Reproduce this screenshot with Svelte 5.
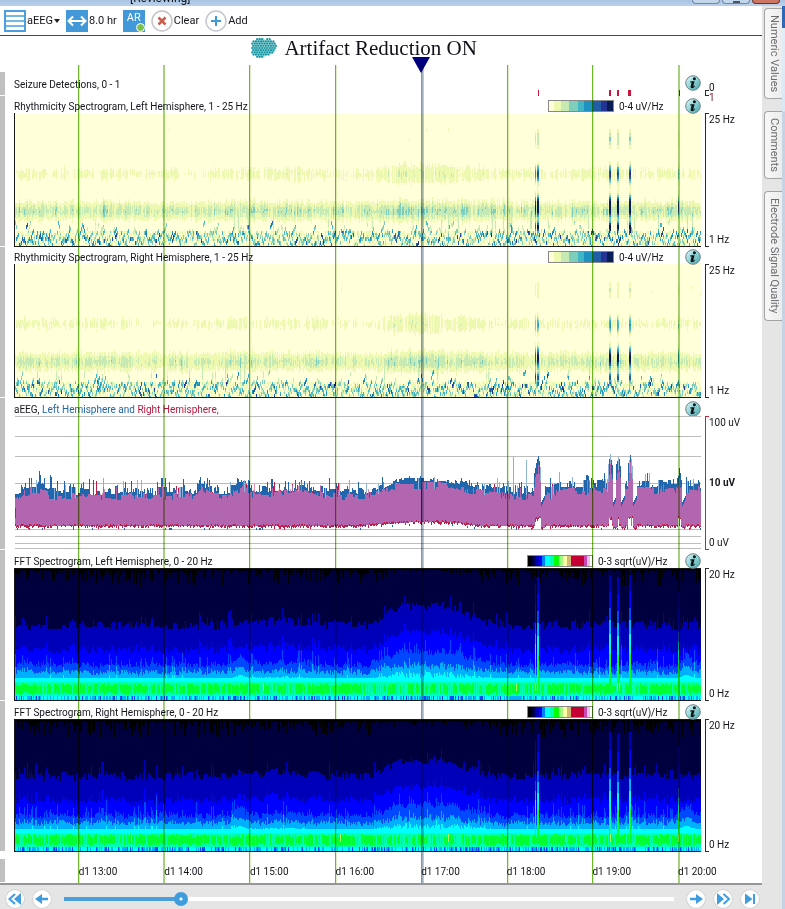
<script lang="ts">
	type Layer = { color: string; d: string };

	const W = 687;
	const H = 133;
	const HOUR = 85.8;
	const FIRST_HOUR = 63.5;

	const hours = [13, 14, 15, 16, 17, 18, 19, 20];
	const seizures = [
		{ x: 521, w: 1, power: 0.75 },
		{ x: 523, w: 2, power: 0.95 },
		{ x: 595, w: 2, power: 1 },
		{ x: 603, w: 2, power: 0.95 },
		{ x: 615, w: 2, power: 1 },
		{ x: 664, w: 1, power: 0.6 },
	];
	const detections = [
		{ x: 524, w: 1 },
		{ x: 595, w: 2 },
		{ x: 603, w: 2 },
		{ x: 614, w: 3 },
		{ x: 665, w: 1 },
	];

	const rhythmColors = ['#ffffd9', '#edf8b1', '#c7e9b4', '#7fcdbb', '#41b6c4', '#1d91c0', '#225ea8', '#253494', '#081d58'];
	const fftColors = ['#000000', '#00003e', '#0000b8', '#0000ff', '#0048ff', '#00b0ff', '#00ffff', '#00ffb0', '#00ff30', '#b0ff60'];

	let position = $state(185);
	let montage = $state('aEEG');
	let reduction = $state(true);

	function random(seed: number) {
		let s = seed;
		return () => {
			s = (s + 0x6d2b79f5) | 0;
			let t = Math.imul(s ^ (s >>> 15), 1 | s);
			t = (t + Math.imul(t ^ (t >>> 7), 61 | t)) ^ t;
			return ((t ^ (t >>> 14)) >>> 0) / 4294967296;
		};
	}

	function smooth(a: number, b: number, x: number) {
		const t = Math.min(1, Math.max(0, (x - a) / (b - a)));
		return t * t * (3 - 2 * t);
	}

	function gauss(x: number, mid: number, width: number) {
		return Math.exp(-(((x - mid) / width) ** 2));
	}

	// activity rises around 17:00
	function activity(x: number) {
		return smooth(350, 390, x) * (1 - smooth(425, 490, x)) + 0.25 * gauss(x, 268, 30) + 0.2 * gauss(x, 225, 10);
	}

	function seizureAt(x: number) {
		return seizures.find((s) => x >= s.x && x < s.x + s.w);
	}

	function layers(colors: string[], cells: string[][]): Layer[] {
		return colors.map((color, i) => ({ color, d: cells[i].join('') })).filter((l) => l.d);
	}

	// short slanted strokes along the bottom of the rhythmicity plots
	function strokes(rnd: () => number) {
		const deep: number[][] = Array.from({ length: W + 8 }, () => new Array(H).fill(0));
		for (let x = 0; x < W; x++) {
			const tall = rnd() < 0.05;
			let y = tall ? 108 + rnd() * 8 : 116 + rnd() * 14;
			const slope = (rnd() < 0.5 ? -1 : 1) * (1 + rnd() * 3);
			const length = 1 + Math.floor(rnd() * 2.5);
			const level = 2 + rnd() * rnd() * 5;
			for (let i = 0; i < length; i++) {
				const from = Math.round(y);
				for (let k = from; k < from + 4; k++) {
					if (k > 104 && k < H) deep[x + i][k] = Math.max(deep[x + i][k], level);
				}
				y += slope;
			}
		}
		return deep;
	}

	function rhythmicity(seed: number, gain: number, midA: number): Layer[] {
		const rnd = random(seed);
		const cells: string[][] = rhythmColors.map(() => []);
		const deep = strokes(rnd);
		let drift = 0;
		for (let x = 0; x < W; x++) {
			const act = activity(x);
			const s = seizureAt(x);
			if (rnd() < 0.35) drift = rnd() * 0.7 - 0.35;
			const a = (0.8 + drift + rnd() * 0.7 + act * 0.6) * (rnd() < 0.15 ? 0.5 : 1);
			const b = 1.7 + drift * 1.3 + rnd() * 1.1 + act * 0.4 + (rnd() < 0.08 ? 0.8 : 0);
			const wA = 5 + rnd() * 4 + act * 4;
			const wB = 7 + rnd() * 4 + act;
			const jitter = rnd() * 3 - 1.5;
			const tail = rnd() < 0.03;
			for (let y = 0; y < H; y += 2) {
				let v = a * gauss(y, midA + jitter, wA) * gain + b * gauss(y, 97 + jitter, wB) * gain;
				v += (rnd() - 0.5) * 0.35 * (y > 45 && y < 115 ? 1 : 0);
				v += deep[x][y] + (y > 116 ? rnd() * 1.6 : 0);
				if (tail) v += 2 * gauss(y, 112, 8);
				if (s) {
					const p = s.power * (gain < 0.95 ? 0.75 : 1);
					v += p * 3 * gauss(y, 25, 9) * gain + p * 6 * gauss(y, 60, 9) * gain;
					v += p * 10 * gauss(y, 92, 10) + (s.power > 0.7 ? 9 * p * gauss(y, 113, 5) : 0);
				}
				const level = Math.min(8, Math.floor(v + 0.1));
				if (level > 0) cells[level].push(`M${x} ${y}h1v2h-1z`);
			}
			if (rnd() < 0.006) cells[1].push(`M${x} ${14 + Math.round(rnd() * 16)}h1v3h-1z`);
		}
		return layers(rhythmColors, cells);
	}

	function fft(seed: number, lift: number): Layer[] {
		const rnd = random(seed);
		const cells: string[][] = fftColors.map(() => []);
		let drift = 0;
		let low = 0;
		for (let x = 0; x < W; x++) {
			if (rnd() < 0.5) drift = rnd() * 9 - 4;
			if (rnd() < 0.4) low = rnd() * 5 - 2;
			const act = activity(x) * lift;
			const s = seizureAt(x);
			const peak = rnd() < 0.12 ? rnd() * 12 : 0;
			const burst = 3 * gauss(x, 672, 6) + 2 * gauss(x, 225, 5) + (rnd() < 0.04 ? 3 : 0);
			let edges = [
				Math.max(1, (rnd() ** 2) * 18 * (1 - act * 0.8)),
				57 - act * 19 + drift - peak,
				79 - act * 17 + drift * 0.7 + rnd() * 5 - peak * 0.7,
				96 - act * 14 + low + rnd() * 5 - 2 - peak - burst * 3,
				107 - act * 5 + low * 0.6 - rnd() * 4 * (1 + act) - peak * 0.5 - burst * 2,
				111 - rnd() * 7 * act - burst,
				115,
				116 + rnd() * 3,
			];
			if (s) {
				const p = s.power * lift;
				edges = [0, 6 + (1 - p) * 40, 22 + (1 - p) * 50, 40 + (1 - p) * 60, 52 + (1 - p) * 55, 66 + (1 - p) * 40, 78 + (1 - p) * 30, 86 + (1 - p) * 25];
			}
			let top = 0;
			edges.forEach((edge, i) => {
				const end = Math.max(top, Math.round(edge));
				if (end > top) cells[i].push(`M${x} ${top}h1V${end}h-1z`);
				top = end;
			});
			const quiet = rnd() < 0.18 + act * 0.4;
			const green = 125 + Math.round(rnd() * 3);
			cells[quiet ? 7 : 8].push(`M${x} ${top}h1V${green}h-1z`);
			cells[7].push(`M${x} ${green}h1V129h-1z`);
			const speck = rnd();
			cells[speck < 0.16 ? 4 : speck < 0.5 ? 5 : 6].push(`M${x} 129h1V133h-1z`);
			if (rnd() < 0.005 || (s && rnd() < 0.5)) cells[9].push(`M${x} 116h1v8h-1z`);
		}
		return layers(fftColors, cells);
	}

	function amplitude(): Layer[] {
		const rnd = random(41);
		const colors = ['#b366b0', '#2166ac', '#c01c46', '#8db4dc', '#dc8fae'];
		const cells: string[][] = colors.map(() => []);
		let wander = 0;
		let sway = 0;
		for (let x = 0; x < W; x++) {
			const act = activity(x);
			if (rnd() < 0.4) wander = rnd() * 9 * (1 - act * 0.5);
			if (rnd() < 0.4) sway = rnd() * 8 - 1;
			const rise = act * 13 + 6 * gauss(x, 18, 12) + 8 * gauss(x, 187, 5) + 6 * smooth(535, 550, x) + 5 * gauss(x, 225, 8);
			let left = 79 - rise - wander - (rnd() < 0.18 ? (3 + rnd() * 9) * (1 - act * 0.8) : 0);
			let right = 83 - rise * 0.85 - sway - (rnd() < 0.12 ? (4 + rnd() * 11) * (1 - act) : 0);
			let bottom = 110 - smooth(330, 410, x) * (1 - smooth(430, 470, x)) * 4;
			let spike = false;
			for (const s of seizures) {
				const near = Math.abs(x - s.x - 1);
				if (near < 3) {
					left = Math.min(left, 74 - s.power * 38 + near * 5 + rnd() * 4);
					right = Math.min(right, 78 - s.power * 32 + near * 7 + rnd() * 6);
					spike = true;
				} else if (x > s.x && near < 7) {
					left = Math.max(left, 92 - near * 2);
					right = Math.max(right, 96 - near * 2);
					bottom = 112;
				}
			}
			if (x === 499) right = 41;
			if (x === 512) left = 44;
			if (spike && rnd() < 0.45) bottom = 102;
			left = Math.round(Math.max(36, left));
			right = Math.round(Math.max(38, right));
			const shared = Math.max(left, right);
			const faded = rnd() < 0.25;
			if (left < right) cells[faded && right - left > 9 ? 3 : 1].push(`M${x} ${left}h1V${right}h-1z`);
			if (right < left) cells[faded ? 4 : 2].push(`M${x} ${right}h1V${left}h-1z`);
			cells[0].push(`M${x} ${shared}h1V${Math.round(bottom)}h-1z`);
			if (rnd() < 0.8) cells[2].push(`M${x} ${Math.round(bottom - rnd() * 2)}h1v${1 + Math.round(rnd() * 2)}h-1z`);
			if (rnd() < 0.04) cells[1].push(`M${x} ${Math.round(bottom) + 2}h1v2h-1z`);
		}
		cells[2].push('M407 71h1V109h-1z', 'M0 92h1v10h-1z');
		return layers(colors, cells);
	}

	function brainDots() {
		const dots: { x: number; y: number }[] = [];
		for (let row = 0; row < 9; row++) {
			for (let col = 0; col < 11; col++) {
				const x = 1.2 + col * 2.5 + (row % 2) * 1.25;
				const y = 1.2 + row * 2.2;
				const front = ((x - 9) / 9) ** 2 + ((y - 10) / 10) ** 2 < 1;
				const back = ((x - 17) / 8.5) ** 2 + ((y - 9) / 8) ** 2 < 1;
				if (front || back) dots.push({ x, y });
			}
		}
		return dots;
	}

	const channels = [
		{ kind: 'rhythm', title: 'Rhythmicity Spectrogram, Left Hemisphere, 1 - 25 Hz', scale: '0-4 uV/Hz', axis: ['25 Hz', '1 Hz'], layers: rhythmicity(7, 1, 60) },
		{ kind: 'rhythm', title: 'Rhythmicity Spectrogram, Right Hemisphere, 1 - 25 Hz', scale: '0-4 uV/Hz', axis: ['25 Hz', '1 Hz'], layers: rhythmicity(19, 0.88, 59) },
		{ kind: 'aeeg', title: 'aEEG,', scale: '', axis: ['100 uV', '10 uV', '0 uV'], layers: amplitude() },
		{ kind: 'fft', title: 'FFT Spectrogram, Left Hemisphere, 0 - 20 Hz', scale: '0-3 sqrt(uV)/Hz', axis: ['20 Hz', '0 Hz'], layers: fft(3, 1) },
		{ kind: 'fft', title: 'FFT Spectrogram, Right Hemisphere, 0 - 20 Hz', scale: '0-3 sqrt(uV)/Hz', axis: ['20 Hz', '0 Hz'], layers: fft(23, 0.85) },
	];
	const brain = brainDots();
	const tabs = ['Numeric Values', 'Comments', 'Electrode Signal Quality'];
</script>

{#snippet info(label: string)}
	<button class="info" aria-label="About {label}">
		<svg viewBox="0 0 16 16" width="16" height="16">
			<defs>
				<linearGradient id="glass" x1="0" y1="0" x2="1" y2="1">
					<stop offset="0" stop-color="#e4f8f8" />
					<stop offset="0.5" stop-color="#8fd3d5" />
					<stop offset="1" stop-color="#3fa2a8" />
				</linearGradient>
			</defs>
			<circle cx="8" cy="8" r="7.3" fill="url(#glass)" stroke="#6f8488" />
			<circle cx="9.4" cy="3.8" r="1.5" fill="#0b1416" />
			<path d="M5.4 6.3h4.2L8.2 11.5q.7 0 1.4-.9l.5.4Q8.900 13.300 6.900 13.300 5.200 13.300 5.700 11.300L6.600 7.500H5.200z" fill="#0b1416" />
		</svg>
	</button>
{/snippet}

<div class="window">
	<div class="titlebar">
		<span class="caption">[Reviewing]</span>
		<div class="controls">
			<button aria-label="Minimize"></button>
			<button aria-label="Maximize"><i></i></button>
			<button class="close" aria-label="Close"></button>
		</div>
	</div>

	<div class="body">
		<main>
			<div class="toolbar">
				<label class="tool">
					<svg viewBox="0 0 22 22" width="22" height="22">
						<rect x="1" y="1" width="20" height="20" fill="#fff" stroke="#4a9fdc" stroke-width="2" />
						<path d="M1 6h20M1 11h20M1 16h20" stroke="#4a9fdc" stroke-width="1.5" />
					</svg>
					<select bind:value={montage} aria-label="Montage">
						<option>aEEG</option>
						<option>FFT</option>
					</select>
					<svg viewBox="0 0 6 4" width="6" height="4"><path d="M0 0h6L3 4z" fill="#222" /></svg>
				</label>
				<button class="tool">
					<svg viewBox="0 0 22 22" width="22" height="22">
						<rect width="22" height="22" fill="#4298d8" />
						<path d="M3 11h16M7 6.500L2.500 11 7 15.500M15 6.500L19.500 11 15 15.500" fill="none" stroke="#fff" stroke-width="2" />
					</svg>
					8.0 hr
				</button>
				<button class="ar" aria-pressed={reduction} onclick={() => (reduction = !reduction)}>
					AR<i class:on={reduction}></i>
				</button>
				<button class="tool">
					<svg viewBox="0 0 22 22" width="22" height="22">
						<circle cx="11" cy="11" r="10" fill="#fff" stroke="#c9c2c4" stroke-width="1.5" />
						<path d="M7.500 7.500l7 7M14.500 7.500l-7 7" stroke="#c8604f" stroke-width="2.6" />
					</svg>
					Clear
				</button>
				<button class="tool">
					<svg viewBox="0 0 22 22" width="22" height="22">
						<circle cx="11" cy="11" r="10" fill="#fff" stroke="#c3c7cf" stroke-width="1.5" />
						<path d="M11 6v10M6 11h10" stroke="#3c9add" stroke-width="2" />
					</svg>
					Add
				</button>
			</div>

			<header>
				<svg viewBox="0 0 26 20" width="26" height="20">
					<ellipse cx="9.5" cy="10" rx="9" ry="10" fill="#a8dcdd" />
					<ellipse cx="17" cy="9.5" rx="8.5" ry="7.5" fill="#a8dcdd" />
					{#each brain as dot}
						<circle cx={dot.x} cy={dot.y} r="1.1" fill="#1795a2" />
					{/each}
				</svg>
				<h1>Artifact Reduction {reduction ? 'ON' : 'OFF'}</h1>
			</header>

			<div class="chart">
				<section class="row detections">
					<div class="handle"></div>
					<div class="track">
						<div class="head">
							<span class="title">Seizure Detections, 0 - 1</span>
							{@render info('Seizure Detections')}
						</div>
						<svg class="ticks" viewBox="0 0 {W} 6" preserveAspectRatio="none">
							{#each detections as mark}
								<rect x={mark.x} y="0" width={mark.w} height="6" fill="#c8173f" />
							{/each}
						</svg>
					</div>
					<div class="axis tiny">
						<div class="bracket"></div>
						<div class="values"><span>0</span><span>1</span></div>
					</div>
				</section>

				{#each channels as channel}
					<section class="row {channel.kind}">
						<div class="handle"></div>
						<div class="track">
							<div class="head">
								<span class="title">
									{channel.title}
									{#if channel.kind === 'aeeg'}
										<span class="left">Left Hemisphere and</span>
										<span class="right">Right Hemisphere,</span>
									{/if}
								</span>
								{#if channel.scale}
									<span class="legend"></span>
									<span class="scale">{channel.scale}</span>
								{/if}
								{@render info(channel.title)}
							</div>
							<svg class="plot" viewBox="0 0 {W} {H}" preserveAspectRatio="none">
								{#if channel.kind === 'aeeg'}
									{#each [0, 20, 40, 67, 113, 120, 127, 132] as y}
										<rect x="0" {y} width={W} height="1" fill="#bdbdbd" />
									{/each}
								{/if}
								{#each channel.layers as layer}
									<path d={layer.d} fill={layer.color} />
								{/each}
							</svg>
						</div>
						<div class="axis">
							<div class="bracket"></div>
							<div class="values">
								{#each channel.axis as value}
									<span>{value}</span>
								{/each}
							</div>
						</div>
					</section>
				{/each}

				<section class="row times">
					<div class="handle"></div>
					<div class="track">
						{#each hours as hour}
							<span>d1 {hour}:00</span>
						{/each}
					</div>
				</section>

				<div class="grid">
					{#each hours as hour, i}
						<div class="line" class:wide={hour === 14 || hour === 20} style="left: {((FIRST_HOUR + i * HOUR) / W) * 100}%"></div>
					{/each}
				</div>
				<div class="cursor">
					<svg viewBox="0 0 18 16" width="18" height="16"><path d="M0 0h18L9 16z" fill="#00007c" /></svg>
				</div>
			</div>

			<footer>
				<button class="nav" aria-label="First page">
					<svg viewBox="0 0 20 20" width="20" height="20"><path d="M10 5L4.500 10 10 15" fill="none" stroke="#3f9ddd" stroke-width="2" /><path d="M16 4v12l-7-6z" fill="#3f9ddd" /></svg>
				</button>
				<button class="nav" aria-label="Back">
					<svg viewBox="0 0 20 20" width="20" height="20"><path d="M3 10l7-5v3.700h6v2.600h-6V15z" fill="#3f9ddd" /></svg>
				</button>
				<input type="range" min="0" max="1000" bind:value={position} aria-label="Position" style="--at: {position / 10}%" />
				<button class="nav" aria-label="Forward">
					<svg viewBox="0 0 20 20" width="20" height="20"><path d="M17 10l-7-5v3.700H4v2.600h6V15z" fill="#3f9ddd" /></svg>
				</button>
				<button class="nav" aria-label="Fast forward">
					<svg viewBox="0 0 20 20" width="20" height="20"><path d="M4 4v12l7-6z" fill="#3f9ddd" /><path d="M10.500 5L16 10l-5.500 5" fill="none" stroke="#3f9ddd" stroke-width="2" /></svg>
				</button>
				<button class="nav" aria-label="Last page">
					<svg viewBox="0 0 20 20" width="20" height="20"><path d="M5 4.500v11l7.500-5.500zM13 5h2v10h-2z" fill="#3f9ddd" /></svg>
				</button>
			</footer>
		</main>

		<aside>
			{#each tabs as tab}
				<button class="tab">{tab}</button>
			{/each}
		</aside>
		<div class="edge"></div>
	</div>
</div>

<style>
	:global(body) {
		background: #e5e5e5;
	}

	.window {
		font-family: Roboto, 'Liberation Sans', sans-serif;
		font-size: 10px;
		line-height: 14px;
		color: #14141c;
	}

	button,
	select {
		font: inherit;
		color: inherit;
		background: none;
		border: 0;
		padding: 0;
		cursor: pointer;
	}

	svg {
		display: block;
		flex: none;
	}

	.titlebar {
		height: 6px;
		display: flex;
		align-items: flex-end;
		justify-content: space-between;
		background: linear-gradient(#a9c5e3, #b9d0ea);
		overflow: hidden;
	}

	.caption {
		font-size: 12px;
		line-height: 14px;
		padding: 0 0 1px 130px;
	}

	.controls {
		display: flex;
		align-self: flex-start;
		gap: 2px;
		padding-right: 5px;
	}

	.controls button {
		box-sizing: border-box;
		width: 28px;
		height: 4px;
		border: 1px solid #72879f;
		border-top: 0;
		border-radius: 0 0 4px 4px;
		background: #c3d7ec;
	}

	.controls i {
		display: block;
		width: 7px;
		height: 2px;
		margin: 0 auto;
		background: #4a5568;
	}

	.controls .close {
		background: #cc7663;
		border-color: #6f3329;
	}

	.body {
		display: flex;
	}

	main {
		flex: 1;
		min-width: 0;
		background: #fff;
	}

	.toolbar {
		height: 29px;
		display: flex;
		align-items: center;
		gap: 6px;
		padding-left: 4px;
		border-bottom: 1px solid #48484c;
		font-size: 11px;
	}

	.tool {
		display: flex;
		align-items: center;
		gap: 1px;
	}

	select {
		appearance: none;
		outline: none;
	}

	.ar {
		width: 22px;
		height: 22px;
		background: #4298d8;
		color: #fff;
		position: relative;
		padding-bottom: 6px;
	}

	.ar i {
		position: absolute;
		right: 0;
		bottom: 0;
		width: 7px;
		height: 7px;
		border: 1px solid #fff;
		border-radius: 50%;
		background: #999;
	}

	.ar i.on {
		background: #7fbf4f;
	}

	header {
		display: flex;
		align-items: center;
		gap: 7px;
		height: 24px;
		padding: 0 0 5px 33%;
	}

	h1 {
		margin: 0;
		font: 21px/24px 'Liberation Serif', serif;
		color: #101018;
		white-space: nowrap;
	}

	.chart {
		position: relative;
		padding-top: 7px;
	}

	.row {
		display: grid;
		grid-template-columns: 5px minmax(0, 1fr) 61px;
	}

	.handle {
		background: #c0c0c0;
		border-bottom: 1px solid #fff;
	}

	.track {
		margin-left: 9px;
		min-width: 0;
	}

	.head {
		display: flex;
		align-items: center;
		box-sizing: border-box;
		height: 17px;
		padding-top: 3px;
		white-space: nowrap;
	}

	.aeeg .head,
	.fft .head {
		height: 18px;
		padding-top: 4px;
	}

	.title,
	.scale {
		padding-top: 2px;
	}

	.title {
		flex: 1;
	}

	.left {
		color: #2166ac;
	}

	.right {
		color: #b5173c;
	}

	.legend {
		box-sizing: border-box;
		width: 66px;
		height: 12px;
		margin-right: 5px;
		border: 1px solid #888;
		background: linear-gradient(
			90deg,
			#ffffd9 0 8%, #edf8b1 0 18%, #c7e9b4 0 31%, #7fcdbb 0 45%, #41b6c4 0 54%,
			#1d91c0 0 68%, #225ea8 0 82%, #253494 0 91%, #081d58 0
		);
	}

	.fft .legend {
		background: linear-gradient(
			90deg,
			#000 0 7%, #00004b 0 11%, #0000b8 0 17%, #0000ff 0 22%, #0080ff 0 27%, #0ff 0 35%, #00ffb0 0 40%,
			#0f0 0 49%, #9dff80 0 54%, #ffffa8 0 61%, #d4b878 0 67%, #c40034 0 87%, #c848b8 0 92%, #ecc0e0 0 97%, #fff 0
		);
	}

	.scale {
		width: 66px;
	}

	.fft .scale {
		width: 87px;
	}

	.info {
		flex: none;
	}

	.plot {
		box-sizing: border-box;
		width: 100%;
		height: 134px;
		border-left: 1px solid #181818;
		border-bottom: 1px solid #181818;
		shape-rendering: crispEdges;
	}

	.rhythm .plot {
		background: #ffffd9;
	}

	.fft .plot {
		height: 133px;
		background: #00003e;
		border-top: 1px solid #181818;
	}

	.aeeg .plot {
		border-color: transparent;
	}

	.detections .head {
		height: 18px;
	}

	.detections .title {
		padding-top: 5px;
	}

	.ticks {
		width: 100%;
		height: 6px;
	}

	.axis {
		display: flex;
		padding: 17px 0 0 4px;
	}

	.aeeg .axis,
	.fft .axis {
		padding-top: 18px;
	}

	.bracket {
		width: 4px;
		box-sizing: border-box;
		border: 1px solid #2a2a2a;
		border-right: 0;
	}

	.aeeg .bracket {
		border-color: #c0283c;
	}

	.values {
		display: flex;
		flex-direction: column;
		justify-content: space-between;
	}

	.aeeg .values span:nth-child(2) {
		font-weight: bold;
	}

	.tiny {
		height: 6px;
		padding-top: 18px;
	}

	.tiny .values {
		margin-top: -7px;
		line-height: 10px;
		justify-content: flex-start;
	}

	.tiny span:last-child {
		color: #7c2030;
	}

	.times {
		margin-top: 7px;
		height: 24px;
	}

	.times .track {
		display: flex;
		align-items: center;
		padding-left: 9%;
		padding-top: 2px;
		margin-left: 11px;
	}

	.times .track span {
		flex: 0 0 13.76%;
		white-space: nowrap;
	}

	.grid,
	.cursor {
		position: absolute;
		inset: 0 61px 0 14px;
		pointer-events: none;
		mix-blend-mode: multiply;
	}

	.line {
		position: absolute;
		top: 0;
		bottom: 0;
		width: 2px;
		background: linear-gradient(90deg, #6fb62e 50%, #dcedc8 50%);
	}

	.line.wide {
		background: #a6cf80;
	}

	.cursor::before {
		content: '';
		position: absolute;
		left: 59.4%;
		top: 0;
		bottom: 0;
		width: 2px;
		background: #c0c0f4;
	}

	.cursor svg {
		position: absolute;
		left: 58%;
		top: -8px;
	}

	footer {
		display: flex;
		align-items: center;
		gap: 7px;
		padding: 4px 2px 0 5px;
		border-top: 2px solid #98969a;
		background: #e5e5e5;
	}

	.nav {
		border-radius: 50%;
		background: #fff;
		box-shadow: inset 0 0 0 1px #cfcfd2;
	}

	input[type='range'] {
		flex: 1;
		min-width: 0;
		appearance: none;
		height: 14px;
		margin: 0 5px;
		background: linear-gradient(90deg, #4a9fdc var(--at), #fff 0) center / 100% 4px no-repeat;
	}

	input[type='range']::-webkit-slider-thumb {
		appearance: none;
		width: 14px;
		height: 14px;
		border-radius: 50%;
		background: radial-gradient(circle, #fff 0 1px, #3f9ddd 2px);
	}

	aside {
		display: flex;
		flex-direction: column;
		align-items: flex-end;
		gap: 12px;
		width: 20px;
		padding-top: 2px;
		background: #e5e5e5;
	}

	.tab {
		box-sizing: border-box;
		width: 18px;
		padding: 6px 0;
		border: 1px solid #a4a4a4;
		border-right: 0;
		border-radius: 4px 0 0 4px;
		background: linear-gradient(90deg, #f8f8f8, #ececec);
		writing-mode: vertical-rl;
		font-size: 11px;
		line-height: 16px;
		color: #6c6c70;
	}

	.edge {
		width: 3px;
		background: linear-gradient(#2f68b4 0 22px, #e2eef7 22px, #d8e8f4 105px, #c6d3e4 106px);
	}
</style>
